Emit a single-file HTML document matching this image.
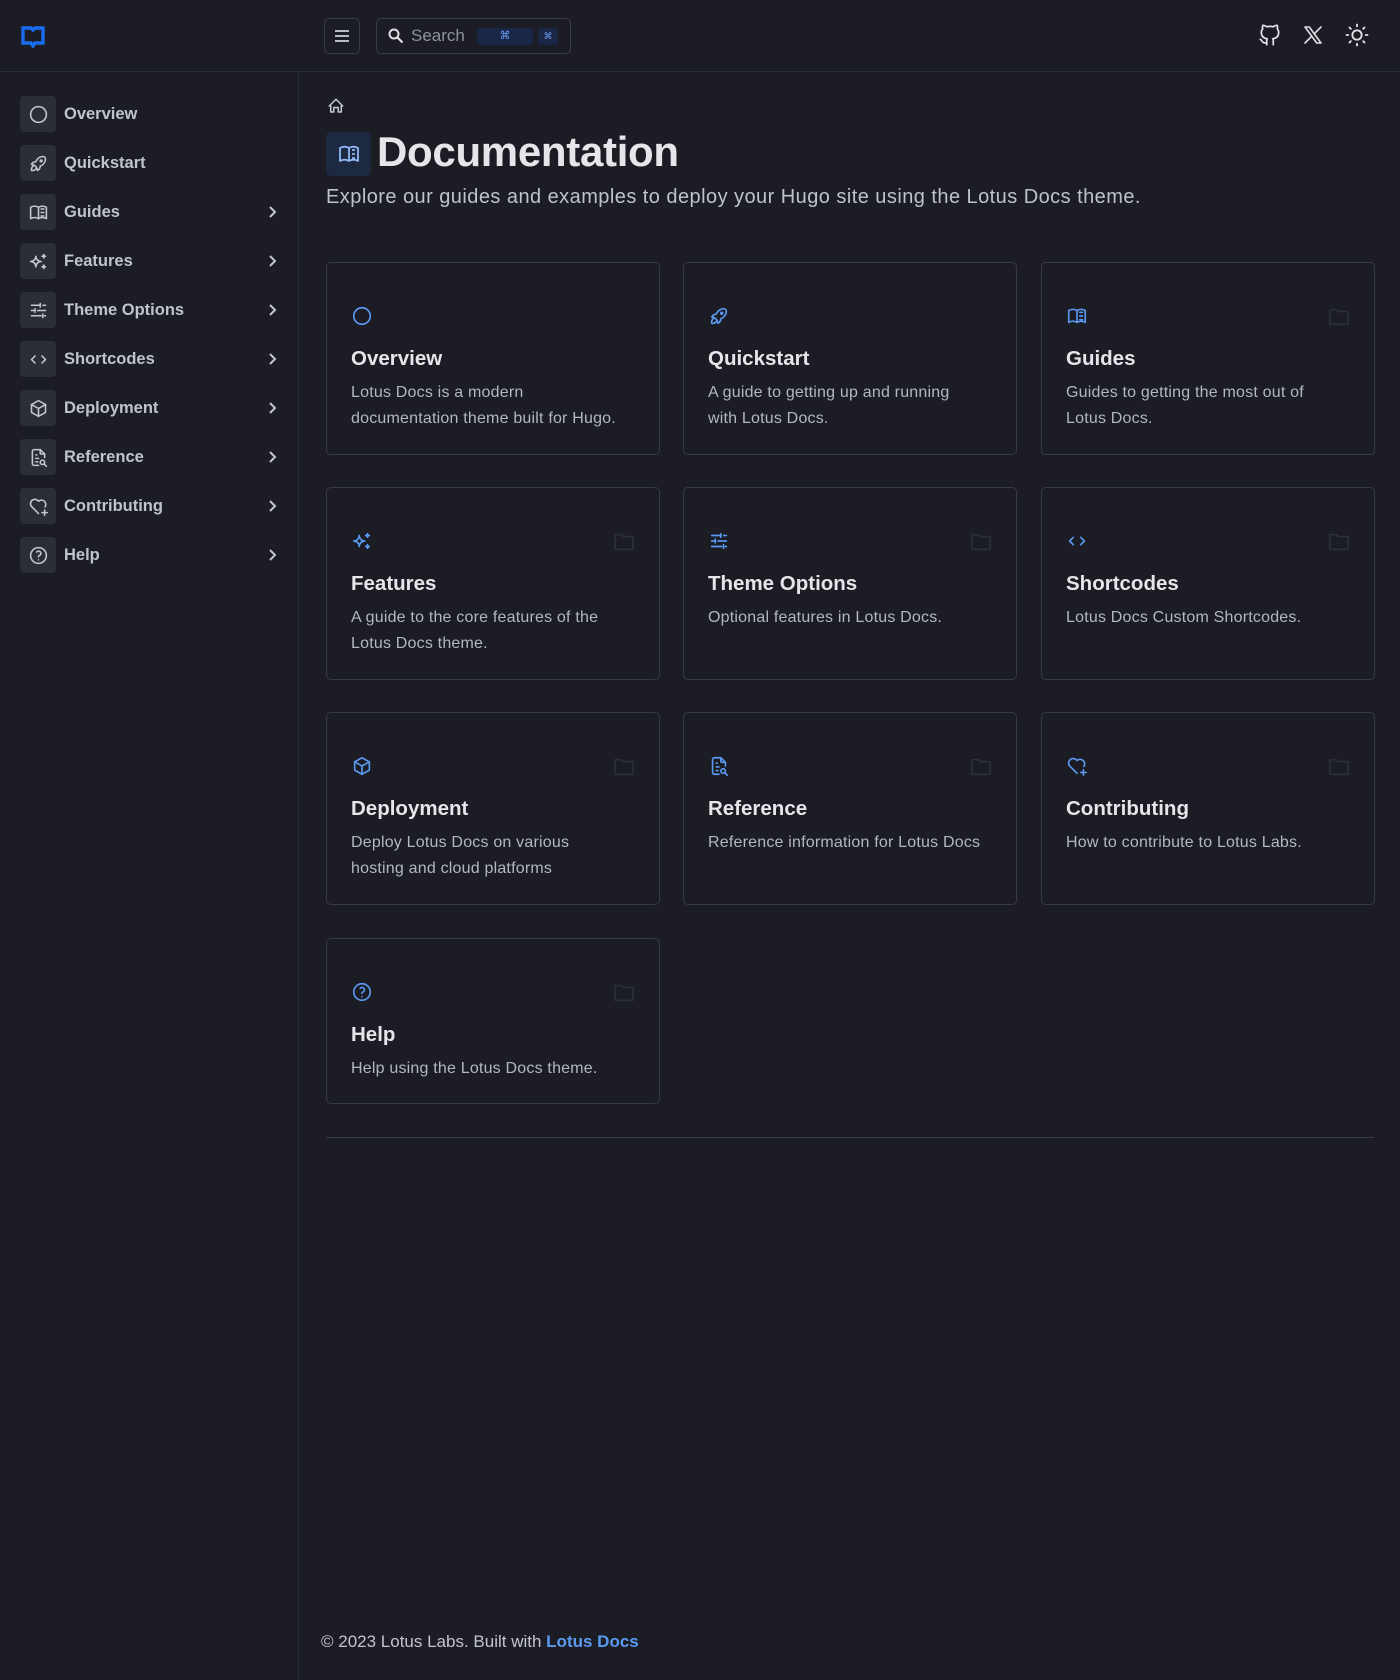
<!DOCTYPE html>
<html><head><meta charset="utf-8"><style>
*{box-sizing:border-box;margin:0;padding:0}
html,body{width:1400px;height:1680px;background:#1b1c24;font-family:"Liberation Sans",sans-serif;overflow:hidden;position:relative}
.hdr{position:absolute;left:0;top:0;width:1400px;height:72px;border-bottom:1px solid #2b2d36}
.side{position:absolute;left:0;top:72px;width:299px;height:1608px;border-right:1px solid #2b2d36}
.ab{position:absolute}
svg{display:block}
.nav{position:absolute;left:20px;width:260px;height:36px}
.nav .ib{position:absolute;left:0;top:0;width:36px;height:36px;border-radius:4px;background:#2b2e37;display:flex;align-items:center;justify-content:center}
.nav .t{position:absolute;left:44px;top:0;line-height:36px;font-size:16.5px;font-weight:bold;color:#bfc3cc}
.nav .ch{position:absolute;left:245px;top:11px}
.card{position:absolute;width:334px;height:193px;border:1px solid #373943;border-radius:5px}
.card .ic{position:absolute;left:24px;top:42px}
.card .fd{position:absolute;right:24px;top:44px}
.card h3{position:absolute;left:24px;top:84px;font-size:20.5px;font-weight:bold;color:#e5e6e9}
.card p{position:absolute;left:24px;top:117px;white-space:nowrap;font-size:16px;letter-spacing:0.2px;line-height:26px;color:#b4b7be}
.hb{position:absolute;top:18px;height:36px;border:1px solid #3a3c45;border-radius:5px}
</style></head><body>
<div class="hdr">
 <svg class="ab" style="left:21px;top:26px" width="24" height="22" viewBox="0 0 24 22"><path d="M2 2h8l2 2 2-2h8v15h-8l-2 3-2-3H2z" fill="none" stroke="#1a6cf0" stroke-width="3.4"/></svg>
 <div class="hb" style="left:324px;width:36px;display:flex;align-items:center;justify-content:center"><svg width="18" height="14" viewBox="0 0 18 14"><path d="M2 2h14M2 7h14M2 12h14" stroke="#d0d2d8" stroke-width="1.8"/></svg></div>
 <div class="hb" style="left:376px;width:195px">
  <svg class="ab" style="left:10px;top:8px" width="18" height="18" viewBox="0 0 18 18"><circle cx="7" cy="7" r="4.5" fill="none" stroke="#e0e2e6" stroke-width="2"/><path d="M10.5 10.5l5 5" stroke="#e0e2e6" stroke-width="2.2"/></svg>
  <span class="ab" style="left:34px;top:7px;font-size:17px;color:#8e929c">Search</span>
  <div class="ab" style="left:100px;top:9px;width:56px;height:17px;border-radius:3px;background:#1a2645;color:#6ea0f5;font-size:11px;text-align:center;line-height:17px">⌘</div>
  <div class="ab" style="left:161px;top:9px;width:20px;height:17px;border-radius:3px;background:#1a2645;color:#6ea0f5;font-size:9px;text-align:center;line-height:17px">⌘</div>
 </div>
 <svg class="ab" style="left:1257px;top:22px" width="26" height="26" viewBox="0 0 24 24" fill="none" stroke="#dfe1e5" stroke-width="1.6" stroke-linecap="round" stroke-linejoin="round"><path d="M9 19c-4.3 1.4-4.3-2.5-6-3m12 5v-3.5c0-1 .1-1.4-.5-2 2.8-.3 5.5-1.4 5.5-6a4.6 4.6 0 0 0-1.3-3.2 4.2 4.2 0 0 0-.1-3.2s-1.1-.3-3.5 1.3a12.3 12.3 0 0 0-6.2 0C6.5 2.8 5.4 3.1 5.4 3.1a4.2 4.2 0 0 0-.1 3.2A4.6 4.6 0 0 0 4 9.5c0 4.6 2.7 5.7 5.5 6-.6.6-.6 1.200-.5 2V21"/></svg>
 <svg class="ab" style="left:1301px;top:23px" width="24" height="24" viewBox="0 0 24 24" fill="none" stroke="#dfe1e5" stroke-width="1.6" stroke-linecap="round" stroke-linejoin="round"><path d="M4 4l11.7 16H20L8.3 4z"/><path d="M4 20l6.8-6.8M13.2 10.8L20 4"/></svg>
 <svg class="ab" style="left:1343px;top:21px" width="28" height="28" viewBox="0 0 24 24" fill="none" stroke="#dfe1e5" stroke-width="1.6" stroke-linecap="round"><circle cx="12" cy="12" r="4"/><path d="M3 12h1.5M19.5 12H21M12 3v1.5M12 19.5V21M5.6 5.6l1.1 1.1M17.3 17.3l1.1 1.1M5.6 18.4l1.1-1.1M17.3 6.7l1.1-1.1"/></svg>
</div>

<div class="side"></div>
<div id="navs"></div>

<svg class="ab" style="left:327px;top:97px" width="18" height="18" viewBox="0 0 24 24" fill="none" stroke="#c6c9cf" stroke-width="2" stroke-linejoin="round"><path d="M5 12H3l9-9 9 9h-2v8h-4v-6H9v6H5z"/></svg>
<div class="ab" style="left:326px;top:132px;width:45px;height:44px;border-radius:5px;background:#1d2841;display:flex;align-items:center;justify-content:center"><svg width="24" height="24" viewBox="0 0 24 24" fill="none" stroke="#8fb8f5" stroke-width="1.8" stroke-linejoin="round"><path d="M3 19a9 9 0 0 1 9 0 9 9 0 0 1 9 0V6a9 9 0 0 0-9 0 9 9 0 0 0-9 0z"/><path d="M12 6v13M15 8h3M15 12h3M15 16h3"/></svg></div>
<div class="ab" style="left:377px;top:128px;font-size:42px;font-weight:bold;color:#e5e6e9;letter-spacing:-0.3px">Documentation</div>
<div class="ab" style="left:326px;top:186px;font-size:20px;letter-spacing:0.45px;color:#bfc2c8">Explore our guides and examples to deploy your Hugo site using the Lotus Docs theme.</div>

<div id="cards"></div>
<div class="ab" style="left:326px;top:1137px;width:1048px;height:1px;background:#3a3c45"></div>
<div class="ab" style="left:321px;top:1632px;font-size:17px;color:#c3c5ca">© 2023 Lotus Labs. Built with <b style="color:#5a9af0">Lotus Docs</b></div>

<script>
const I={
ov:'<circle cx="12" cy="12" r="9"/>',
qs:'<path d="M4 13a8 8 0 0 1 7 7 6 6 0 0 0 3-5 9 9 0 0 0 6-8 3 3 0 0 0-3-3 9 9 0 0 0-8 6 6 6 0 0 0-5 3"/><path d="M7 14a6 6 0 0 0-3 6 6 6 0 0 0 6-3"/><circle cx="15" cy="9" r="1"/>',
gu:'<path d="M3 19a9 9 0 0 1 9 0 9 9 0 0 1 9 0V6a9 9 0 0 0-9 0 9 9 0 0 0-9 0z"/><path d="M12 6v13M15 8h3M15 12h3M15 16h3"/>',
fe:'<path d="M16 18a2 2 0 0 1 2 2 2 2 0 0 1 2-2 2 2 0 0 1-2-2 2 2 0 0 1-2 2zm0-12a2 2 0 0 1 2 2 2 2 0 0 1 2-2 2 2 0 0 1-2-2 2 2 0 0 1-2 2zM9 18a6 6 0 0 1 6-6 6 6 0 0 1-6-6 6 6 0 0 1-6 6 6 6 0 0 1 6 6z"/>',
th:'<path d="M4 6h9M17 6h3M4 12h3M11 12h9M4 18h11M19 18h1M14 4v4M8 10v4M17 16v4"/>',
sc:'<path d="M8 8l-4 4 4 4M16 8l4 4-4 4"/>',
de:'<path d="M12 3l8 4.5v9L12 21l-8-4.5v-9z"/><path d="M12 12l8-4.5M12 12v9M12 12L4 7.5"/>',
re:'<path d="M14 3v4a1 1 0 0 0 1 1h4"/><path d="M12 21H7a2 2 0 0 1-2-2V5a2 2 0 0 1 2-2h7l5 5v4"/><path d="M9 9h1M9 13h3M9 17h2"/><circle cx="16.5" cy="17.5" r="2.5"/><path d="M18.5 19.5L21 22"/>',
co:'<path d="M12 20l-7.5-7.5A5 5 0 1 1 12 6a5 5 0 0 1 7.5 6.5"/><path d="M16 19h6M19 16v6"/>',
he:'<circle cx="12" cy="12" r="9"/><path d="M12 17v.01M12 13.5a1.5 1.5 0 0 1 1-1.5 2.6 2.6 0 1 0-3-4"/>'};
const items=[['ov','Overview',0,'Lotus Docs is a modern<br>documentation theme built for Hugo.'],['qs','Quickstart',0,'A guide to getting up and running<br>with Lotus Docs.'],['gu','Guides',1,'Guides to getting the most out of<br>Lotus Docs.'],['fe','Features',1,'A guide to the core features of the<br>Lotus Docs theme.'],['th','Theme Options',1,'Optional features in Lotus Docs.'],['sc','Shortcodes',1,'Lotus Docs Custom Shortcodes.'],['de','Deployment',1,'Deploy Lotus Docs on various<br>hosting and cloud platforms'],['re','Reference',1,'Reference information for Lotus Docs'],['co','Contributing',1,'How to contribute to Lotus Labs.'],['he','Help',1,'Help using the Lotus Docs theme.']];
const sv=(k,c,s)=>`<svg width="${s}" height="${s}" viewBox="0 0 24 24" fill="none" stroke="${c}" stroke-width="1.8" stroke-linecap="round" stroke-linejoin="round">${I[k]}</svg>`;
let n='',c='';
items.forEach((it,i)=>{
 n+=`<div class="nav" style="top:${96+i*49}px"><div class="ib">${sv(it[0],'#c4c7ce',21)}</div><div class="t">${it[1]}</div>${it[2]?'<svg class="ch" width="14" height="14" viewBox="0 0 14 14"><path d="M5 2l5 5-5 5" fill="none" stroke="#c4c7ce" stroke-width="2"/></svg>':''}</div>`;
 const col=i%3,row=Math.floor(i/3);
 const x=[326,683,1041][col],y=[262,487,712,938][row],h=row==3?166:193;
 c+=`<div class="card" style="left:${x}px;top:${y}px;height:${h}px"><div class="ic">${sv(it[0],'#5b98ef',22)}</div>${i>1?'<svg class="fd" width="22" height="20" viewBox="0 0 24 22"><path d="M2 4a1 1 0 0 1 1-1h6l2 2h10a1 1 0 0 1 1 1v12a1 1 0 0 1-1 1H3a1 1 0 0 1-1-1z" fill="none" stroke="#2e3038" stroke-width="1.8"/></svg>':''}<h3>${it[1]}</h3><p>${it[3]}</p></div>`;
});
document.getElementById('navs').innerHTML=n;document.getElementById('cards').innerHTML=c;
</script>
</body></html>
